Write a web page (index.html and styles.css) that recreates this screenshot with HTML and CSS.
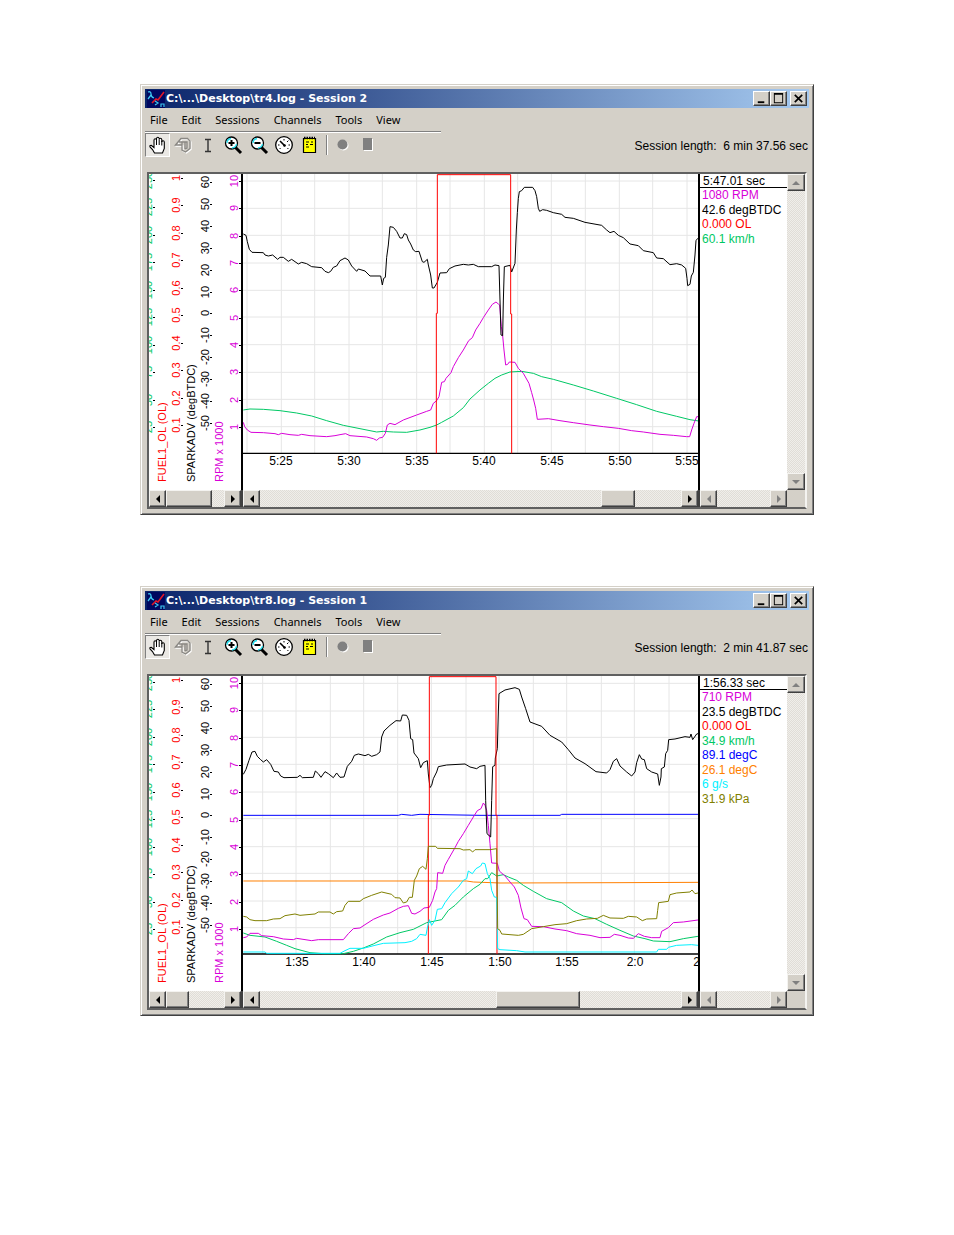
FILE: index.html
```html
<!doctype html>
<html lang="en">
<head>
  <meta charset="utf-8">
  <title>Log Viewer</title>
  <meta name="viewport" content="width=device-width, initial-scale=1">
  <link rel="stylesheet" href="styles.css">
</head>
<body>

<svg class="defs" aria-hidden="true">
  <symbol id="i-app" viewBox="0 0 18 18">
    <rect width="18" height="18" fill="#000860"/>
    <path d="M1 2q3-1 3 2t3 4M4 5L1 9" fill="none" stroke="#3cc8f0" stroke-width="1.3"/>
    <path d="M5 13l4-4 2 1 6-8" fill="none" stroke="#e01828" stroke-width="1.6"/>
    <path d="M8 11l3 2-3 2M14 17v-3h3v3" fill="none" stroke="#3cc8f0" stroke-width="1.2"/>
  </symbol>
  <symbol id="i-hand" viewBox="0 0 20 20">
    <path d="M6.500 18l-2-3.500L2 12q-.6-1.800 1.200-1.800L6 12.500V5q.1-1.300 1.200-1.300T8.500 5V3.500q.2-1.300 1.300-1.300T11.200 3.500V4.500q.2-1.200 1.300-1.200T13.800 4.600V7q.2-1.200 1.300-1.200T16.300 7v6.500L14.500 18z" fill="#fff" stroke="#000" stroke-width="1.100"/>
    <path d="M8.500 5v5M11.200 4.500V10M13.800 6v4.500" stroke="#000" stroke-width="1"/>
  </symbol>
  <symbol id="i-marker" viewBox="0 0 20 20">
    <path d="M2.500 10L8 3.500h6.500L17 6v7.500L12.500 17 9 15v-5z" fill="none" stroke="#fff" stroke-width="1.300" transform="translate(1 1)"/>
    <path d="M2.500 10L8 3.500h6.500L17 6v7.500L12.500 17 9 15v-5zM9 10V7h5v6l-2 1M6 7h3M12 7v7" fill="none" stroke="#8a8884" stroke-width="1.300"/>
  </symbol>
  <symbol id="i-cursor" viewBox="0 0 20 20">
    <path d="M7 4.500h2.500l.5.700.5-.7H13M7 16.500h2.500l.5-.7.5.7H13M10 5v11" fill="none" stroke="#333" stroke-width="1.400"/>
  </symbol>
  <symbol id="i-zoom-in" viewBox="0 0 20 20">
    <path d="M12.500 12.500L18 18" stroke="#000" stroke-width="3"/>
    <circle cx="8.500" cy="8" r="6" fill="#fff" stroke="#000" stroke-width="1.300"/>
    <path d="M4 8q0-4 4-4.500M9 13q4-.5 4.500-4" fill="none" stroke="#20e0f0" stroke-width="1.300"/>
    <path d="M5.500 8h6M8.500 5v6" stroke="#000" stroke-width="2"/>
  </symbol>
  <symbol id="i-zoom-out" viewBox="0 0 20 20">
    <path d="M12.500 12.500L18 18" stroke="#000" stroke-width="3"/>
    <circle cx="8.500" cy="8" r="6" fill="#fff" stroke="#000" stroke-width="1.300"/>
    <path d="M4 8q0-4 4-4.500M9 13q4-.5 4.500-4" fill="none" stroke="#20e0f0" stroke-width="1.300"/>
    <path d="M5.500 8h6" stroke="#000" stroke-width="2"/>
  </symbol>
  <symbol id="i-gauge" viewBox="0 0 20 20">
    <circle cx="10" cy="10" r="8.300" fill="#fff" stroke="#000" stroke-width="1.300"/>
    <path d="M4 10h1.500M14.500 10H16M10 4v1.500M14.400 5.600L13 7M5.600 14l1-1M14.400 14l-1-1" stroke="#000" stroke-width="1"/>
    <path d="M6 6l5 5" stroke="#000" stroke-width="1.600"/>
    <circle cx="10.500" cy="10.500" r="1.300"/>
  </symbol>
  <symbol id="i-note" viewBox="0 0 20 20">
    <path d="M4.500 3.500h12v14h-12z" fill="#ff0" stroke="#000" stroke-width="1.200"/>
    <path d="M5 3h11" stroke="#000" stroke-width="2.400" stroke-dasharray="1.500 1"/>
    <path d="M7 7h3M12 7h2M7 9.500h2M11 9.500h3M7 12h3" stroke="#000" stroke-width="1.200"/>
  </symbol>
  <symbol id="i-record" viewBox="0 0 20 20">
    <circle cx="10.500" cy="10.500" r="5" fill="#fff"/>
    <circle cx="9.500" cy="9.500" r="5" fill="#808080"/>
  </symbol>
  <symbol id="i-stop" viewBox="0 0 20 20">
    <path d="M6 4h9v12H6z" fill="#fff"/>
    <path d="M5 3h9v12H5z" fill="#808080"/>
  </symbol>
  <symbol id="i-min" viewBox="0 0 16 14"><path d="M4 10h7v2H4z"/></symbol>
  <symbol id="i-max" viewBox="0 0 16 14"><path d="M3 1h10v11H3zM4 3v8h8V3z" fill-rule="evenodd"/></symbol>
  <symbol id="i-close" viewBox="0 0 16 14"><path d="M4 3l8 8M12 3l-8 8" stroke="#000" stroke-width="1.800"/></symbol>
  <symbol id="i-left" viewBox="0 0 10 10"><path d="M7 1v8L3 5z"/></symbol>
  <symbol id="i-right" viewBox="0 0 10 10"><path d="M3 1v8l4-4z"/></symbol>
  <symbol id="i-up" viewBox="0 0 10 10"><path d="M1 7h8L5 3z"/></symbol>
  <symbol id="i-down" viewBox="0 0 10 10"><path d="M1 3h8L5 7z"/></symbol>
</svg>

<main>
  <section class="window">
    <header class="titlebar">
      <svg class="app-icon"><use href="#i-app"/></svg>
      <h2>C:\...\Desktop\tr4.log - Session 2</h2>
      <button class="cap" aria-label="Minimize"><svg><use href="#i-min"/></svg></button>
      <button class="cap" aria-label="Maximize"><svg><use href="#i-max"/></svg></button>
      <button class="cap close" aria-label="Close"><svg><use href="#i-close"/></svg></button>
    </header>
    <nav class="menu">
      <button>File</button><button>Edit</button><button>Sessions</button><button>Channels</button><button>Tools</button><button>View</button>
    </nav>
    <div class="toolbar">
      <div class="tools">
        <button class="on" aria-label="Pan"><svg><use href="#i-hand"/></svg></button>
        <button aria-label="Marker"><svg><use href="#i-marker"/></svg></button>
        <button aria-label="Cursor"><svg><use href="#i-cursor"/></svg></button>
        <button aria-label="Zoom in"><svg><use href="#i-zoom-in"/></svg></button>
        <button aria-label="Zoom out"><svg><use href="#i-zoom-out"/></svg></button>
        <button aria-label="Gauges"><svg><use href="#i-gauge"/></svg></button>
        <button aria-label="Notes"><svg><use href="#i-note"/></svg></button>
      </div>
      <div class="rec">
        <button aria-label="Record"><svg><use href="#i-record"/></svg></button>
        <button aria-label="Stop"><svg><use href="#i-stop"/></svg></button>
      </div>
      <p>Session length:&nbsp; 6 min 37.56 sec</p>
    </div>
    <div class="work">
      <div class="pane axes"><svg id="axes1" viewBox="0 0 92 316"></svg></div>
      <div class="pane plot"><svg id="plot1" viewBox="0 0 455 316"></svg></div>
      <div class="pane legend">
        <h3>5:47.01 sec</h3>
        <ul>
          <li class="rpm">1080 RPM</li>
          <li>42.6 degBTDC</li>
          <li class="fuel">0.000 OL</li>
          <li class="speed">60.1 km/h</li>
        </ul>
      </div>
      <div class="vbar off">
        <button aria-label="Scroll up"><svg><use href="#i-up"/></svg></button>
        <button aria-label="Scroll down"><svg><use href="#i-down"/></svg></button>
      </div>
      <div class="hbar">
        <button aria-label="Scroll axes left"><svg><use href="#i-left"/></svg></button>
        <div class="track"><div class="thumb" style="margin-left:0%;width:79%"></div></div>
        <button aria-label="Scroll axes right"><svg><use href="#i-right"/></svg></button>
      </div>
      <div class="hbar">
        <button aria-label="Scroll plot left"><svg><use href="#i-left"/></svg></button>
        <div class="track"><div class="thumb" style="margin-left:81%;width:8%"></div></div>
        <button aria-label="Scroll plot right"><svg><use href="#i-right"/></svg></button>
      </div>
      <div class="hbar off">
        <button aria-label="Scroll values left"><svg><use href="#i-left"/></svg></button>
        <div class="track"></div>
        <button aria-label="Scroll values right"><svg><use href="#i-right"/></svg></button>
      </div>
    </div>
  </section>

  <section class="window">
    <header class="titlebar">
      <svg class="app-icon"><use href="#i-app"/></svg>
      <h2>C:\...\Desktop\tr8.log - Session 1</h2>
      <button class="cap" aria-label="Minimize"><svg><use href="#i-min"/></svg></button>
      <button class="cap" aria-label="Maximize"><svg><use href="#i-max"/></svg></button>
      <button class="cap close" aria-label="Close"><svg><use href="#i-close"/></svg></button>
    </header>
    <nav class="menu">
      <button>File</button><button>Edit</button><button>Sessions</button><button>Channels</button><button>Tools</button><button>View</button>
    </nav>
    <div class="toolbar">
      <div class="tools">
        <button class="on" aria-label="Pan"><svg><use href="#i-hand"/></svg></button>
        <button aria-label="Marker"><svg><use href="#i-marker"/></svg></button>
        <button aria-label="Cursor"><svg><use href="#i-cursor"/></svg></button>
        <button aria-label="Zoom in"><svg><use href="#i-zoom-in"/></svg></button>
        <button aria-label="Zoom out"><svg><use href="#i-zoom-out"/></svg></button>
        <button aria-label="Gauges"><svg><use href="#i-gauge"/></svg></button>
        <button aria-label="Notes"><svg><use href="#i-note"/></svg></button>
      </div>
      <div class="rec">
        <button aria-label="Record"><svg><use href="#i-record"/></svg></button>
        <button aria-label="Stop"><svg><use href="#i-stop"/></svg></button>
      </div>
      <p>Session length:&nbsp; 2 min 41.87 sec</p>
    </div>
    <div class="work">
      <div class="pane axes"><svg id="axes2" viewBox="0 0 92 315"></svg></div>
      <div class="pane plot"><svg id="plot2" viewBox="0 0 455 315"></svg></div>
      <div class="pane legend">
        <h3>1:56.33 sec</h3>
        <ul>
          <li class="rpm">710 RPM</li>
          <li>23.5 degBTDC</li>
          <li class="fuel">0.000 OL</li>
          <li class="speed">34.9 km/h</li>
          <li class="coolant">89.1 degC</li>
          <li class="intake">26.1 degC</li>
          <li class="flow">6 g/s</li>
          <li class="map">31.9 kPa</li>
        </ul>
      </div>
      <div class="vbar off">
        <button aria-label="Scroll up"><svg><use href="#i-up"/></svg></button>
        <button aria-label="Scroll down"><svg><use href="#i-down"/></svg></button>
      </div>
      <div class="hbar">
        <button aria-label="Scroll axes left"><svg><use href="#i-left"/></svg></button>
        <div class="track"><div class="thumb" style="margin-left:0%;width:39%"></div></div>
        <button aria-label="Scroll axes right"><svg><use href="#i-right"/></svg></button>
      </div>
      <div class="hbar">
        <button aria-label="Scroll plot left"><svg><use href="#i-left"/></svg></button>
        <div class="track"><div class="thumb" style="margin-left:56%;width:20%"></div></div>
        <button aria-label="Scroll plot right"><svg><use href="#i-right"/></svg></button>
      </div>
      <div class="hbar off">
        <button aria-label="Scroll values left"><svg><use href="#i-left"/></svg></button>
        <div class="track"></div>
        <button aria-label="Scroll values right"><svg><use href="#i-right"/></svg></button>
      </div>
    </div>
  </section>
</main>

<script src="charts.js"></script>
</body>
</html>
```

FILE: styles.css
```css
:root{--face:#d4d0c8;--shade:#808080;--dark:#404040}
*{box-sizing:border-box}
body{margin:0;padding:84px 140px;background:#fff;color:#000;font-family:"Liberation Sans",Arial,sans-serif;font-size:12px}
h2,h3,p,ul{margin:0;padding:0;font-size:inherit;font-weight:400}
ul{list-style:none}
svg{display:block}
button{padding:0;border:0;background:none;color:inherit;font:inherit;display:flex;align-items:center;justify-content:center}
.defs{position:absolute;width:0;height:0}
main{display:flex;flex-direction:column;gap:71px}

/* window frame */
.window{background:var(--face);border:1px solid;border-color:var(--face) var(--dark) var(--dark) var(--face);box-shadow:inset 1px 1px #fff,inset -1px -1px var(--shade);padding:4px 4px 5px}
.titlebar{display:flex;align-items:center;height:19px;padding:0 2px;background:linear-gradient(90deg,#0a246a,#a6caf0);color:#fff}
.app-icon{width:18px;height:18px}
.titlebar h2{flex:1;margin-left:1px;font:bold 11px "DejaVu Sans",Verdana,sans-serif;white-space:nowrap}
.cap{width:17px;height:15px;background:var(--face);border:1px solid;border-color:#fff var(--dark) var(--dark) #fff;box-shadow:inset -1px -1px var(--shade)}
.cap svg{width:15px;height:13px}
.close{margin-left:3px}
.menu{display:flex;gap:14px;width:296px;height:24px;padding-left:5px;border-bottom:1px solid var(--shade);box-shadow:0 1px #fff;font:11px "Noto Sans",sans-serif}
.menu button{height:22px}

/* toolbar */
.toolbar{display:flex;align-items:center;height:25px;margin-bottom:15px}
.tools{display:grid;grid-template-columns:repeat(7,1fr);width:177px;height:24px}
.tools svg,.rec svg{width:20px;height:20px}
.on{background:#eae8e4;border:1px solid;border-color:var(--shade) #fff #fff var(--shade)}
.rec{display:flex;margin-left:4px;padding-left:3px;border-left:1px solid var(--shade);box-shadow:inset 1px 0 #fff}
.rec button{width:25px}
.toolbar p{margin-left:auto;margin-right:1px;padding-top:2px}

/* work area */
.work{display:grid;grid-template-columns:94px 1fr 89px 18px;margin:0 2px;border:2px solid;border-color:#606060 #f4f3f0 #606060 #606060}
.pane{background:#fff;overflow:hidden}
.pane svg{width:100%}
.axes{border-right:2px solid #000}
.legend{border-left:2px solid #000}
.legend h3{height:14px;padding-left:3px;line-height:15px;border-bottom:1px solid #000}
.legend ul{display:grid;grid-template-rows:repeat(8,1fr);height:116px;padding-left:2px;line-height:14px;white-space:nowrap}
.rpm{color:#d800d8}
.fuel{color:#f00}
.speed{color:#00c864}
.coolant{color:#00f}
.intake{color:#ff8000}
.flow{color:#00f0ff}
.map{color:#808000}

/* scroll bars */
.vbar,.hbar,.track{background:repeating-conic-gradient(#f0eeea 0 25%,#e0ddd7 0 50%) 0 0/2px 2px}
.vbar{display:flex;flex-direction:column;justify-content:space-between}
.hbar{display:flex;height:17px}
.track{flex:1}
.thumb{height:17px}
.vbar button,.hbar button,.thumb{background:var(--face);border:1px solid;border-color:#f4f3f0 var(--dark) var(--dark) #f4f3f0;box-shadow:inset -1px -1px var(--shade)}
.vbar button{height:17px}
.hbar button{width:17px}
.vbar svg,.hbar svg{width:10px;height:10px}
.off svg{fill:var(--shade)}
.hbar:nth-child(5){border-right:2px solid var(--dark)}
.hbar:nth-child(7){border-left:2px solid var(--dark)}

/* charts */
.grid{stroke:#e6e6e6;stroke-width:3}
.base{stroke:#000;stroke-width:4}
.trace{fill:none;stroke-width:3;stroke-linejoin:round;shape-rendering:crispEdges}
.tick{font-size:12px;text-anchor:middle}
.scale{font-size:11px;text-anchor:middle}
.name{font-size:11px}
```

FILE: charts.js
```js
// traces are stored in thirds of a pixel, measured from (-3, -4)
const COLORS = {
  rpm: '#d800d8', spark: '#000', fuel: '#f00', speed: '#00c864',
  coolant: '#00f', intake: '#ff8000', flow: '#00f0ff', map: '#808000'
};

const charts = [
  {
    id: 1, base: 850,
    vx: [21,124,224,327,427,530,630,733,833,934,1036,1138,1238,1341],
    hy: [33,115,196,279,361,441,524,607,688,770],
    times: [['5:25',38],['5:30',106],['5:35',174],['5:40',241],['5:45',309],['5:50',377],['5:55',444]],
    traces: [
      ['speed', '10,720 30,717 70,718 120,722 170,729 215,738 260,752 310,766 360,776 410,786 430,784 460,786 500,787 540,780 570,772 590,765 605,757 640,738 670,713 690,687 720,660 745,640 765,625 785,615 810,606 845,604 880,610 905,620 940,628 1000,645 1060,663 1130,685 1190,704 1250,724 1310,739 1350,749 1376,753'],
      ['rpm', '10,757 14,770 22,780 33,787 70,788 105,791 115,794 125,790 150,794 175,796 185,793 210,797 260,800 285,797 300,794 317,791 330,797 380,801 400,806 410,811 418,804 428,802 436,790 442,765 450,760 465,764 490,750 530,735 560,724 572,720 580,700 590,692 597,680 605,637 613,635 618,625 633,608 640,590 655,563 670,540 686,512 697,503 707,480 720,460 730,443 745,420 757,403 768,396 775,402 779,405 784,470 788,497 792,540 797,585 803,583 808,576 825,577 835,595 850,610 867,640 875,668 881,690 887,715 892,748 925,746 960,752 1000,758 1050,765 1090,770 1135,775 1175,782 1210,786 1260,793 1300,796 1340,800 1349,800 1355,780 1362,760 1370,740 1376,740'],
      ['spark', '10,192 18,196 22,215 28,238 36,247 70,248 75,255 85,258 98,255 113,268 120,262 130,262 145,274 155,268 175,282 185,277 200,281 215,290 245,293 255,304 265,308 272,304 280,292 290,288 300,272 315,264 325,270 335,288 350,304 355,297 375,303 390,318 422,318 427,345 431,325 436,322 440,262 445,225 450,170 460,172 470,184 480,204 487,204 493,191 500,194 505,210 512,222 520,240 527,245 537,244 547,275 552,277 562,268 565,285 572,315 577,354 582,354 592,337 600,309 620,308 628,296 645,288 670,283 685,285 700,283 715,290 755,290 765,285 777,287 780,390 783,495 788,497 790,393 793,290 810,286 815,306 825,280 829,180 832,128 835,85 838,65 845,62 853,52 878,52 885,62 890,80 895,115 899,124 908,119 920,121 940,128 965,133 975,142 1000,145 1035,157 1085,166 1100,180 1110,188 1122,184 1135,196 1150,203 1170,222 1195,227 1210,242 1240,248 1250,264 1270,266 1290,284 1310,281 1325,285 1337,295 1341,325 1343,347 1350,343 1354,318 1360,307 1365,255 1368,212 1373,205'],
      ['fuel', '589,850 589,430 592,430 592,14 812,14 812,432 815,432 815,850']
    ]
  },
  {
    id: 2, base: 846,
    vx: [68,168,271,371,473,574,678,777,880,980,1084,1183,1287],
    hy: [34,117,196,277,360,440,524,604,687,767],
    times: [['1:35',54],['1:40',121],['1:45',189],['1:50',257],['1:55',324],['2:0',392],['2:05',462]],
    traces: [
      ['intake', '10,627 680,627 700,630 780,633 1140,632 1374,631'],
      ['coolant', '10,430 475,430 485,427 515,430 540,427 720,430 960,430 965,427 1374,427'],
      ['speed', '10,783 30,790 75,795 110,808 140,820 165,830 210,842 250,845 310,845 340,838 370,828 400,816 440,795 480,782 520,772 560,752 585,747 605,743 625,715 645,700 670,675 700,650 720,637 735,620 743,620 755,602 770,612 790,608 805,615 830,625 850,640 880,658 920,680 965,692 1000,717 1030,732 1065,740 1100,757 1140,775 1180,792 1215,800 1240,807 1290,809 1330,800 1374,793'],
      ['rpm', '10,797 20,795 30,784 55,784 65,791 100,794 130,801 160,803 170,799 215,806 235,803 310,803 325,785 340,770 360,768 375,758 400,742 430,729 450,723 475,709 490,703 505,701 515,724 525,726 540,718 552,708 568,706 578,685 585,660 590,650 593,602 608,604 615,580 625,562 645,527 655,508 670,485 685,460 700,435 712,416 723,410 730,393 735,400 740,415 745,460 750,515 755,573 772,574 778,597 795,612 810,630 823,645 835,670 843,708 852,740 862,743 875,763 910,764 945,771 980,776 1010,785 1050,790 1080,797 1110,796 1123,787 1140,790 1165,798 1180,799 1195,785 1213,793 1235,797 1260,797 1265,778 1285,767 1300,752 1330,750 1374,744'],
      ['spark', '10,307 18,292 27,265 36,240 45,238 52,253 62,263 70,270 80,263 92,277 102,298 115,300 122,312 132,317 172,316 180,310 187,317 220,316 226,297 235,305 243,316 255,299 265,305 280,317 290,303 300,316 312,315 322,283 335,268 343,250 355,246 375,251 385,247 395,253 410,248 420,240 425,195 432,177 450,160 468,146 482,147 487,129 500,130 507,145 512,200 518,203 522,243 535,260 542,287 550,272 562,266 565,306 570,347 575,340 580,320 590,300 595,284 620,279 675,276 690,285 710,290 720,283 735,280 737,385 741,485 752,495 755,385 758,284 765,280 766,258 772,230 775,120 777,65 795,54 825,47 838,52 845,75 857,110 870,150 905,163 930,190 965,210 985,233 1005,258 1035,275 1068,299 1100,303 1110,293 1120,268 1130,260 1140,282 1160,300 1175,312 1185,300 1190,272 1198,248 1205,261 1213,263 1220,290 1235,300 1253,306 1258,340 1263,315 1264,290 1273,285 1277,245 1283,235 1286,203 1305,201 1335,194 1350,196 1353,186 1358,203 1370,186 1374,185'],
      ['fuel', '565,846 565,430 568,430 568,14 768,14 768,430 771,430 771,846'],
      ['flow', '10,840 75,840 80,844 300,844 315,836 330,829 370,829 405,820 430,814 495,812 515,808 530,800 540,787 558,790 562,768 568,743 575,760 585,745 592,712 605,710 615,692 635,665 655,645 670,625 680,620 685,597 697,605 708,590 722,582 727,573 735,575 742,605 750,620 755,655 763,675 770,676 773,830 780,833 830,836 855,840 1250,840 1255,832 1280,832 1285,826 1310,820 1355,818 1374,820'],
      ['map', '10,733 20,735 30,743 45,746 80,746 100,741 120,740 135,731 165,726 180,730 225,726 235,720 270,720 280,726 290,719 308,717 315,700 325,688 360,688 370,680 395,670 425,660 455,667 465,677 480,678 490,693 500,690 508,676 517,676 523,625 530,612 538,590 548,583 558,592 562,560 565,523 587,523 592,529 660,530 670,534 690,533 698,540 705,533 750,533 770,530 773,770 780,775 785,786 835,790 850,787 875,770 910,764 945,758 980,755 1010,746 1040,741 1072,739 1090,730 1110,738 1150,739 1165,733 1190,735 1207,746 1220,741 1250,740 1253,715 1256,692 1285,688 1290,668 1310,663 1350,660 1356,654 1365,665 1374,663']
    ]
  }
];

function line(x1, y1, x2, y2, cls) {
  return `<line x1="${x1}" y1="${y1}" x2="${x2}" y2="${y2}" class="${cls}"/>`;
}

function drawPlot(c) {
  const grid = c.vx.map(x => line(x, 12, x, c.base, 'grid')).join('') +
    c.hy.map(y => line(9, y, 1374, y, 'grid')).join('');
  const traces = c.traces.map(([k, p]) => `<polyline class="trace" stroke="${COLORS[k]}" points="${p}"/>`).join('');
  const times = c.times.map(([t, x]) => `<text class="tick" x="${x}" y="${c.id === 1 ? 291 : 290}">${t}</text>`).join('');
  document.getElementById('plot' + c.id).innerHTML =
    `<g transform="translate(-3 -4) scale(.33333)">${grid}${line(9, c.base, 1374, c.base, 'base')}${traces}</g>${times}`;
}

// vertical scales: label baseline x, first and last label centre
const scales = [
  { x: 3, from: 6, to: 253, color: 'speed', labels: [250,225,200,175,150,125,100,75,50,25] },
  { x: 31, from: 4, to: 251, color: 'fuel', labels: ['1','0.9','0.8','0.7','0.6','0.5','0.4','0.3','0.2','0.1'] },
  { x: 60, from: 8, to: 249, color: 'spark', labels: [60,50,40,30,20,10,0,-10,-20,-30,-40,-50] },
  { x: 89, from: 7, to: 253, color: 'rpm', labels: [10,9,8,7,6,5,4,3,2,1] }
];
const names = [
  [17, 'fuel', 'FUEL1_OL (OL)'],
  [46, 'spark', 'SPARKADV (degBTDC)'],
  [74, 'rpm', 'RPM x 1000']
];

function drawAxes(c) {
  let out = '';
  scales.forEach(s => {
    const step = (s.to - s.from) / (s.labels.length - 1);
    s.labels.forEach((t, i) => {
      const y = Math.round(s.from + i * step);
      out += `<text class="scale" fill="${COLORS[s.color]}" transform="translate(${s.x} ${y}) rotate(-90)">${t}</text>`;
      out += `<rect x="${s.x + 1}" y="${y}" width="2" height="1"/>`;
    });
  });
  names.forEach(([x, k, t]) => {
    out += `<text class="name" fill="${COLORS[k]}" transform="translate(${x} ${c.id === 1 ? 308 : 307}) rotate(-90)">${t}</text>`;
  });
  document.getElementById('axes' + c.id).innerHTML = out;
}

charts.forEach(c => { drawPlot(c); drawAxes(c); });
```
